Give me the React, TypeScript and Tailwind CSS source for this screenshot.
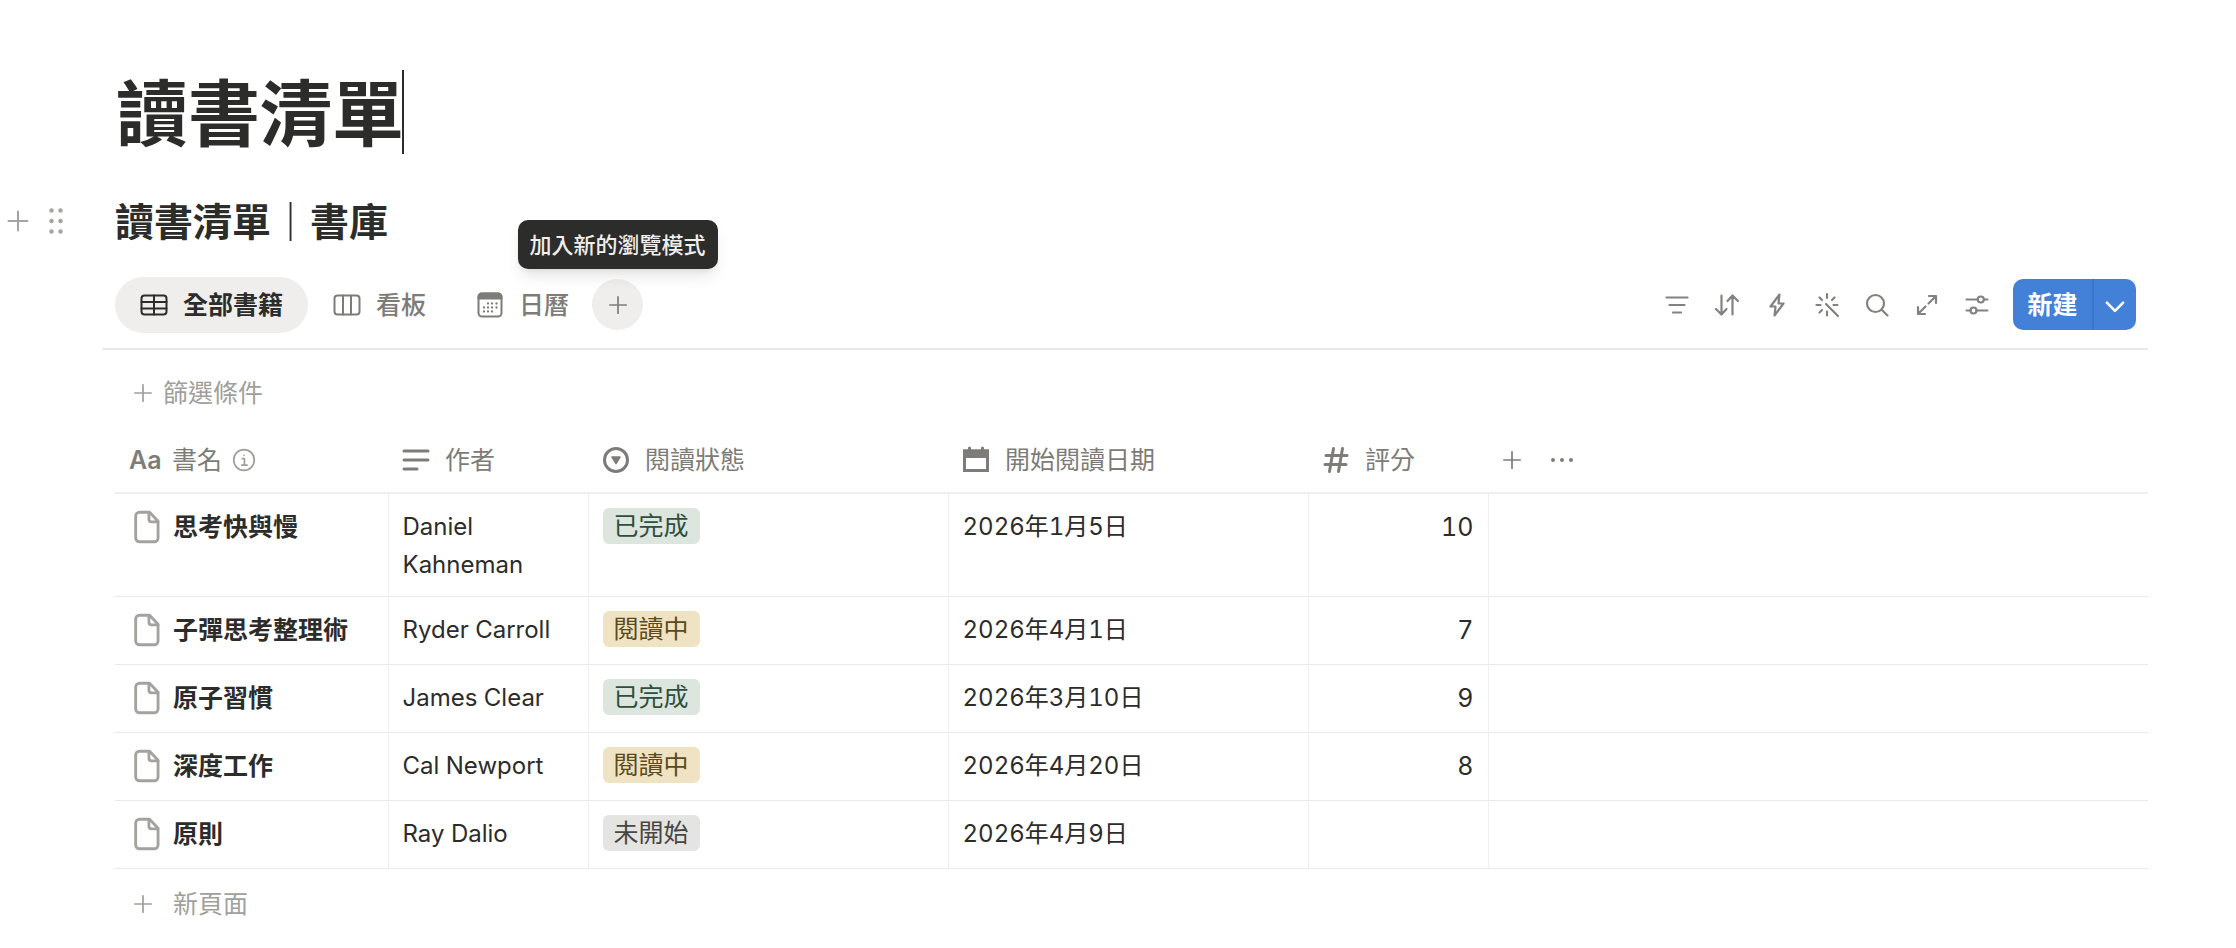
import { ReactNode, useState } from 'react';

type Status = 'done' | 'reading' | 'todo';

interface Book {
  title: string;
  author: string;
  status: Status;
  date: string;
  rating?: number;
}

const books: Book[] = [
  { title: '思考快與慢', author: 'Daniel Kahneman', status: 'done', date: '2026年1月5日', rating: 10 },
  { title: '子彈思考整理術', author: 'Ryder Carroll', status: 'reading', date: '2026年4月1日', rating: 7 },
  { title: '原子習慣', author: 'James Clear', status: 'done', date: '2026年3月10日', rating: 9 },
  { title: '深度工作', author: 'Cal Newport', status: 'reading', date: '2026年4月20日', rating: 8 },
  { title: '原則', author: 'Ray Dalio', status: 'todo', date: '2026年4月9日' },
];

const statusLabels: Record<Status, string> = {
  done: '已完成',
  reading: '閱讀中',
  todo: '未開始',
};

const statusStyles: Record<Status, string> = {
  done: 'bg-[#dce6df] text-[#2e4f3d]',
  reading: 'bg-[#f0e3c3] text-[#5c4a1c]',
  todo: 'bg-[#e4e4e3] text-[#484744]',
};

interface IconProps {
  children: ReactNode;
  className?: string;
  width?: number;
}

function Icon({ children, className = 'size-7', width = 2 }: IconProps) {
  return (
    <svg
      viewBox="0 0 28 28"
      className={`shrink-0 ${className}`}
      fill="none"
      stroke="currentColor"
      strokeWidth={width}
      strokeLinecap="round"
      strokeLinejoin="round"
      aria-hidden="true"
    >
      {children}
    </svg>
  );
}

const plus = <path d="M14 4.5v19M4.5 14h19" />;

const views = [
  {
    id: 'all',
    label: '全部書籍',
    icon: (
      <>
        <rect x="1.5" y="4.5" width="25" height="19" rx="3" />
        <path d="M1.5 11h25M1.5 17.5h25M14 4.5v19" />
      </>
    ),
  },
  {
    id: 'board',
    label: '看板',
    icon: (
      <>
        <rect x="1.5" y="4.5" width="25" height="19" rx="3" />
        <path d="M10 4.5v19M18 4.5v19" />
      </>
    ),
  },
  {
    id: 'calendar',
    label: '日曆',
    icon: (
      <>
        <rect x="2.5" y="2.5" width="23" height="23" rx="3.5" />
        <path d="M2.5 7.5V6A3.5 3.5 0 0 1 6 2.5h16A3.5 3.5 0 0 1 25.5 6v1.5z" fill="currentColor" />
        <path
          d="M12 12.5h0M16 12.5h0M20.5 12.5h0M8 16.5h0M12 16.5h0M16 16.5h0M20.5 16.5h0M8 20.5h0M12 20.5h0M16 20.5h0"
          strokeWidth="2.3"
        />
      </>
    ),
  },
];

const tools = [
  { label: '篩選', icon: <path d="M3.5 6.5h21M6.5 14h15M10 21.5h8" /> },
  { label: '排序', icon: <path d="M8.5 4.5v18M3 18l5.5 5.5 5-5.5M19.5 23.5V5M14.5 10l5-5.5L25 10" /> },
  { label: '自動化', icon: <path d="M16.5 3.5L7.5 15.5h5L11.5 24.5l9-12h-5z" /> },
  {
    label: 'AI',
    icon: (
      <path d="M13 13L25 25M14 3v4M3.5 14h4M20.5 14h4M14 20.5v4M6.5 6.5l2.5 2.5M21.5 6.5l-2.5 2.5M6.5 21.5l2.5-2.5" />
    ),
  },
  {
    label: '搜尋',
    icon: (
      <>
        <circle cx="12.5" cy="12.5" r="8.5" />
        <path d="M18.5 18.5l6 6" />
      </>
    ),
  },
  { label: '展開', icon: <path d="M16 5h7v7M22.5 5.5l-7 7M5 16v7h7M5.5 22.5l7-7" /> },
  {
    label: '設定',
    icon: (
      <>
        <path d="M3.5 8.5h11M21 8.5h3.5M3.5 19.5h4M13.5 19.5h11" />
        <circle cx="17.8" cy="8.5" r="3" />
        <circle cx="10.5" cy="19.5" r="3" />
      </>
    ),
  },
];

function PageIcon() {
  return (
    <Icon className="size-9 text-[#a3a29f]" width={2.2}>
      <path d="M8.2 2.5h7.8l6.6 7v13a3 3 0 0 1-3 3H8.2a3 3 0 0 1-3-3v-17a3 3 0 0 1 3-3z" />
      <path d="M15.5 2.8V8a2 2 0 0 0 2 2h5" />
    </Icon>
  );
}

function HeaderCell({ icon, children }: { icon: ReactNode; children: ReactNode }) {
  return (
    <th scope="col" className="p-0 font-normal">
      <div className="flex h-16 items-center gap-[15px] px-3.5">
        {icon}
        <span className="flex items-center gap-2.5">{children}</span>
      </div>
    </th>
  );
}

export default function App() {
  const [activeView, setActiveView] = useState('all');
  const [title, setTitle] = useState('讀書清單');

  return (
    <main className="min-h-screen bg-white pt-[68px] pr-[88px] font-['Inter','Noto_Sans_CJK_TC',sans-serif] text-[25px] leading-[38px] text-[#2c2c2b]">
      <div className="flex h-[88px] items-center pl-[116px]">
        <input
          aria-label="頁面標題"
          value={title}
          onChange={(e) => setTitle(e.target.value)}
          className="h-[88px] w-[286px] pb-2 text-[72px] font-bold outline-none"
        />
        <span className="h-[84px] w-0.5 bg-[#2c2c2b]" />
      </div>

      <div className="mt-8 flex h-[65px] items-center">
        <div className="flex w-[115px] items-center gap-2.5 pl-1 text-[#a5a4a1]">
          <button aria-label="新增區塊">
            <Icon>{plus}</Icon>
          </button>
          <button aria-label="拖曳">
            <Icon>
              <path d="M9.5 3.5h0M18.5 3.5h0M9.5 14h0M18.5 14h0M9.5 24.5h0M18.5 24.5h0" strokeWidth="4.5" />
            </Icon>
          </button>
        </div>
        <h2 className="pt-0.5 text-[39px] font-bold">讀書清單｜書庫</h2>
      </div>

      <div className="ml-[102px] flex h-[97px] items-center justify-between border-b-2 border-[#e9e9e7] pt-2 pr-3 pl-[13px]">
        <div className="flex items-center">
          {views.map((view) => (
            <button
              key={view.id}
              onClick={() => setActiveView(view.id)}
              className={`flex h-14 items-center gap-[15px] rounded-full px-[25px] ${
                activeView === view.id ? 'bg-[#efeeed] font-semibold' : 'font-medium text-[#7d7c78]'
              }`}
            >
              <Icon>{view.icon}</Icon>
              {view.label}
            </button>
          ))}
          <div className="relative -ml-0.5">
            <button
              aria-label="加入新的瀏覽模式"
              className="flex size-[51px] items-center justify-center rounded-full bg-[#efeeed] text-[#7d7c78]"
            >
              <Icon className="size-6">{plus}</Icon>
            </button>
            <div
              role="tooltip"
              className="absolute bottom-full left-1/2 mb-2.5 flex h-[49px] -translate-x-1/2 items-center rounded-[10px] bg-[#2c2c2b] px-3 text-[22px] font-medium whitespace-nowrap text-[#f0efed] shadow-lg"
            >
              加入新的瀏覽模式
            </div>
          </div>
        </div>

        <div className="flex items-center">
          <div className="mr-[22px] flex gap-[22px] text-[#83827e]">
            {tools.map((tool) => (
              <button key={tool.label} aria-label={tool.label}>
                <Icon width={2.2}>{tool.icon}</Icon>
              </button>
            ))}
          </div>
          <div className="flex h-[51px] overflow-hidden rounded-[10px] bg-[#4380d8] text-white">
            <button className="w-[81px] border-r-2 border-[#3b74c6] font-semibold">新建</button>
            <button aria-label="更多選項" className="flex w-[42px] items-center justify-center pt-1">
              <Icon className="size-6" width={3}>
                <path d="M4.5 9l9.5 9.5L23.5 9" />
              </Icon>
            </button>
          </div>
        </div>
      </div>

      <div className="pl-[115px]">
        <button className="mt-6 ml-4 flex items-center gap-2 text-[#a09f9b]">
          <Icon className="size-6">{plus}</Icon>
          篩選條件
        </button>

        <table className="mt-4 w-full table-fixed border-collapse text-left tabular-nums">
          <colgroup>
            <col className="w-[273px]" />
            <col className="w-[200px]" />
            <col className="w-[360px]" />
            <col className="w-[360px]" />
            <col className="w-[180px]" />
            <col />
          </colgroup>
          <thead className="border-b-2 border-[#f0efee] text-[#7d7c78]">
            <tr>
              <HeaderCell icon={<span className="w-7 font-semibold">Aa</span>}>
                書名
                <Icon className="size-6 text-[#a09f9b]">
                  <circle cx="14" cy="14" r="12" />
                  <path d="M12 12.5h2.5V20M11.5 20h6M14 8.5h0" />
                </Icon>
              </HeaderCell>
              <HeaderCell
                icon={
                  <Icon width={3}>
                    <path d="M2 5h24M2 14h24M2 23h13" />
                  </Icon>
                }
              >
                作者
              </HeaderCell>
              <HeaderCell
                icon={
                  <Icon width={3}>
                    <circle cx="14" cy="14" r="11.5" />
                    <path d="M10 11h8l-4 6.5z" fill="currentColor" strokeWidth="1.5" />
                  </Icon>
                }
              >
                閱讀狀態
              </HeaderCell>
              <HeaderCell
                icon={
                  <Icon width={3}>
                    <path d="M2.5 5h23v19.5h-23z" strokeLinejoin="miter" />
                    <path d="M2.5 5h23v5.5h-23zM7.5 2v3M20.5 2v3" fill="currentColor" strokeLinejoin="miter" />
                  </Icon>
                }
              >
                開始閱讀日期
              </HeaderCell>
              <HeaderCell
                icon={
                  <Icon width={3}>
                    <path d="M4 9.5h21M3 18.5h21M11.5 2.5L7.5 25.5M20.5 2.5l-4 23" />
                  </Icon>
                }
              >
                評分
              </HeaderCell>
              <th scope="col" className="p-0">
                <div className="flex items-center gap-6 px-3">
                  <button aria-label="新增欄位">
                    <Icon className="size-6">{plus}</Icon>
                  </button>
                  <button aria-label="更多">
                    <Icon>
                      <path d="M5 14h0M14 14h0M23 14h0" strokeWidth="4" />
                    </Icon>
                  </button>
                </div>
              </th>
            </tr>
          </thead>
          <tbody>
            {books.map((book) => (
              <tr key={book.title} className="h-[68px] border-b border-[#e9e9e7] align-top">
                <td className="border-r border-[#efefed] px-3.5 pt-3.5 pb-3">
                  <div className="flex items-center gap-2 font-semibold whitespace-nowrap">
                    <PageIcon />
                    {book.title}
                  </div>
                </td>
                <td className="border-r border-[#efefed] px-3.5 pt-3.5 pb-3 text-[24px] leading-[38px]">
                  {book.author}
                </td>
                <td className="border-r border-[#efefed] px-3.5 pt-3.5 pb-3">
                  <span
                    className={`inline-flex h-9 items-center rounded-md px-[11px] align-top ${statusStyles[book.status]}`}
                  >
                    {statusLabels[book.status]}
                  </span>
                </td>
                <td className="border-r border-[#efefed] px-3.5 pt-3.5 pb-3 text-[24px] leading-[38px]">{book.date}</td>
                <td className="border-r border-[#efefed] px-3.5 pt-3.5 pb-3 text-right">{book.rating}</td>
                <td />
              </tr>
            ))}
          </tbody>
        </table>

        <button className="mt-4 ml-4 flex items-center gap-[18px] text-[#a09f9b]">
          <Icon className="size-6">{plus}</Icon>
          新頁面
        </button>
      </div>
    </main>
  );
}
